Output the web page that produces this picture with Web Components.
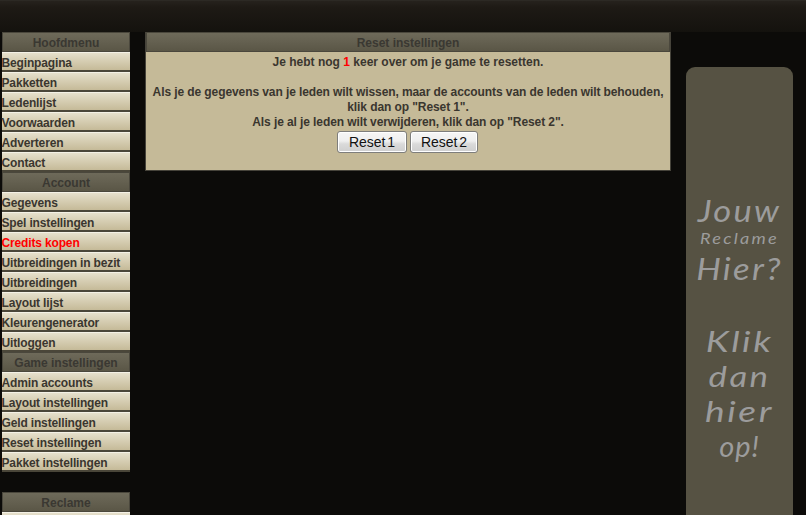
<!DOCTYPE html>
<html>
<head>
<meta charset="utf-8">
<title>Reset instellingen</title>
<style>
  html, body { margin: 0; padding: 0; height: 100%; overflow: hidden; }
  body { background: #0c0b09; font: bold 12px/15px "Liberation Sans", Arial, sans-serif; color: #3a362f; }
</style>
</head>
<body>
<game-page>
  <side-menu slot="left" title="Hoofdmenu">
    <menu-link>Beginpagina</menu-link>
    <menu-link>Pakketten</menu-link>
    <menu-link>Ledenlijst</menu-link>
    <menu-link>Voorwaarden</menu-link>
    <menu-link>Adverteren</menu-link>
    <menu-link>Contact</menu-link>
  </side-menu>
  <side-menu slot="left" title="Account">
    <menu-link>Gegevens</menu-link>
    <menu-link>Spel instellingen</menu-link>
    <menu-link hot>Credits kopen</menu-link>
    <menu-link>Uitbreidingen in bezit</menu-link>
    <menu-link>Uitbreidingen</menu-link>
    <menu-link>Layout lijst</menu-link>
    <menu-link>Kleurengenerator</menu-link>
    <menu-link>Uitloggen</menu-link>
  </side-menu>
  <side-menu slot="left" title="Game instellingen">
    <menu-link>Admin accounts</menu-link>
    <menu-link>Layout instellingen</menu-link>
    <menu-link>Geld instellingen</menu-link>
    <menu-link>Reset instellingen</menu-link>
    <menu-link>Pakket instellingen</menu-link>
  </side-menu>
  <side-menu slot="left" title="Reclame" class="gap">
    <menu-link>&nbsp;</menu-link>
  </side-menu>

  <content-panel title="Reset instellingen">
    <span style="letter-spacing:0">Je hebt nog <span style="color:#ff0000">1</span> keer over om je game te resetten.</span><br><br>
    Als je de gegevens van je leden wilt wissen, maar de accounts van de leden wilt behouden,<br>klik dan op "Reset 1".<br>
    Als je al je leden wilt verwijderen, klik dan op "Reset 2".<br>
    <reset-button style="width:70px;margin:0 3px 0 -1px">Reset 1</reset-button><reset-button style="width:68px">Reset 2</reset-button>
  </content-panel>

  <ad-banner slot="right"></ad-banner>
</game-page>

<script>
class GamePage extends HTMLElement {
  constructor() {
    super();
    this.attachShadow({ mode: 'open' }).innerHTML = `
      <style>
        :host { display: block; height: 515px; overflow: hidden; }
        .top {
          height: 32px;
          box-sizing: border-box;
          background: linear-gradient(#26221d, #1e1a15 20%, #14120e);
          border-top: 1px solid #2c2924;
        }
        .cols { display: flex; align-items: flex-start; padding-left: 2px; }
        .left { width: 128px; flex: none; }
        .main { width: 526px; flex: none; margin-left: 15px; }
        .right { width: 107px; flex: none; margin-left: 15px; padding-top: 35px; }
      </style>
      <div class="top"></div>
      <div class="cols">
        <div class="left"><slot name="left"></slot></div>
        <div class="main"><slot></slot></div>
        <div class="right"><slot name="right"></slot></div>
      </div>
    `;
  }
}

class SideMenu extends HTMLElement {
  constructor() {
    super();
    this.attachShadow({ mode: 'open' });
  }

  connectedCallback() {
    this.shadowRoot.innerHTML = `
      <style>
        :host { display: block; }
        :host(.gap) { margin-top: 20px; }
        .head {
          box-sizing: border-box;
          height: 20px;
          line-height: 20px;
          text-align: center;
          color: #3a3832;
          background: linear-gradient(#6e6a5a, #5a5646);
          border: 1px solid #4a473c;
        }
      </style>
      <div class="head">${this.getAttribute('title')}</div>
      <slot></slot>
    `;
  }
}

class MenuLink extends HTMLElement {
  constructor() {
    super();
    this.attachShadow({ mode: 'open' }).innerHTML = `
      <style>
        :host {
          display: block;
          box-sizing: border-box;
          height: 20px;
          line-height: 19px;
          padding-top: 1px;
          white-space: nowrap;
          letter-spacing: -0.15px;
          text-indent: -0.5px;
          background: linear-gradient(#e6e0cc, #d8d0b6 40%, #c5ba98);
          border-top: 1px solid #f4f1e6;
          border-bottom: 2px solid #4a4639;
        }
        :host([hot]) { color: #ff0000; }
      </style>
      <slot></slot>
    `;
  }
}

class ContentPanel extends HTMLElement {
  constructor() {
    super();
    this.attachShadow({ mode: 'open' });
  }

  connectedCallback() {
    this.shadowRoot.innerHTML = `
      <style>
        :host {
          display: block;
          box-sizing: border-box;
          height: 139px;
          background: #c5ba98;
          border: 1px solid #46433a;
          border-top: 0;
        }
        .head {
          height: 20px;
          box-sizing: border-box;
          line-height: 20px;
          text-align: center;
          color: #3a3832;
          background: linear-gradient(#6e6a5a, #5a5646);
          border: 1px solid #4a473c;
        }
        .body {
          text-align: center;
          padding: 3px 5px 0;
          white-space: nowrap;
          letter-spacing: -0.09px;
        }
      </style>
      <div class="head">${this.getAttribute('title')}</div>
      <div class="body"><slot></slot></div>
    `;
  }
}

class ResetButton extends HTMLElement {
  constructor() {
    super();
    this.attachShadow({ mode: 'open' }).innerHTML = `
      <style>
        :host { display: inline-block; vertical-align: top; }
        button {
          display: block;
          box-sizing: border-box;
          width: 100%;
          height: 22px;
          padding: 0;
          margin: 1px 0 0;
          border: 1px solid #7e7e7c;
          border-radius: 3px;
          background: linear-gradient(#f6f6f6, #efefef 45%, #dadada 60%, #cfcfcf);
          box-shadow: inset 0 0 0 1px #fff;
          color: #111;
          font: 14px "Liberation Sans", Arial, sans-serif;
          word-spacing: -2px;
        }
      </style>
      <button><slot></slot></button>
    `;
  }
}

class AdBanner extends HTMLElement {
  constructor() {
    super();
    this.attachShadow({ mode: 'open' }).innerHTML = `
      <style>
        :host {
          display: block;
          box-sizing: border-box;
          height: 520px;
          padding-top: 125px;
          background: #565243;
          border-radius: 9px 9px 0 0;
          text-align: center;
          color: #9c9c9c;
          font: italic 400 29px/35px Lato, sans-serif;
        }
        div { white-space: nowrap; letter-spacing: 2px; }
        .jouw { font-size: 30px; line-height: 36px; transform: scaleX(1.15); }
        .small { font-size: 16px; line-height: 19px; transform: scaleX(1.13); }
        .big { font-size: 31px; line-height: 43px; transform: scaleX(1.12); }
        .klik { margin-top: 33px; transform: scaleX(1.28); }
        .dan { transform: scaleX(1.2); }
        .hier { transform: scaleX(1.28); }
        .op { letter-spacing: 1px; }
      </style>
      <div class="jouw">Jouw</div>
      <div class="small">Reclame</div>
      <div class="big">Hier?</div>
      <div class="klik">Klik</div>
      <div class="dan">dan</div>
      <div class="hier">hier</div>
      <div class="op">op!</div>
    `;
  }
}

customElements.define('game-page', GamePage);
customElements.define('side-menu', SideMenu);
customElements.define('menu-link', MenuLink);
customElements.define('content-panel', ContentPanel);
customElements.define('reset-button', ResetButton);
customElements.define('ad-banner', AdBanner);
</script>
</body>
</html>
